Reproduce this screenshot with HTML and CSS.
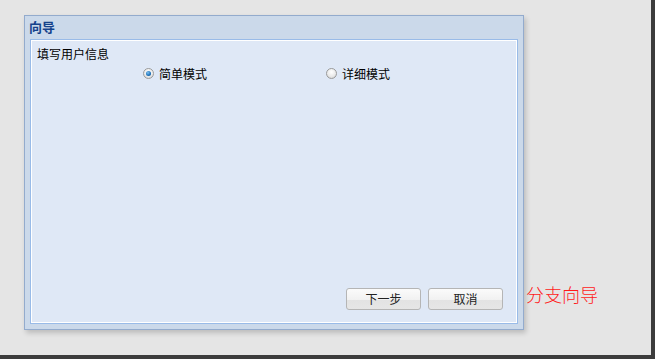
FILE: index.html
```html
<!DOCTYPE html>
<html lang="zh">
<head>
    <meta charset="UTF-8">
    <title>向导</title>
    <link rel="stylesheet" href="styles.css">
</head>
<body>
    <div class="screen">
        <div class="window">
            <div class="win-header">向导</div>
            <div class="win-body">
                <div class="form-title">填写用户信息</div>
                <div class="radio-group">
                    <label class="radio-item">
                        <span class="radio checked"></span>
                        <span class="radio-label">简单模式</span>
                    </label>
                    <label class="radio-item">
                        <span class="radio"></span>
                        <span class="radio-label">详细模式</span>
                    </label>
                </div>
                <div class="spacer"></div>
                <div class="buttons">
                    <button class="btn">下一步</button>
                    <button class="btn">取消</button>
                </div>
            </div>
        </div>
        <div class="note">分支向导</div>
    </div>
</body>
</html>
```

FILE: styles.css
```css
* {
    box-sizing: border-box;
}

html {
    overflow: hidden;
    background: #3c3c3c;
}

body {
    margin: 0;
    background: #e5e5e5;
    font-family: "Noto Sans CJK SC", "DejaVu Sans", sans-serif;
    font-size: 12px;
}

.screen {
    width: 100vw;
    height: 100vh;
    background: #e5e5e5;
    border-right: 4px solid #3c3c3c;
    border-bottom: 4px solid #3c3c3c;
    display: flex;
    align-items: flex-start;
}

.window {
    margin: 15px 0 0 24px;
    width: 500px;
    height: 315px;
    border: 1px solid #93abcd;
    background: #cbd9ea;
    box-shadow: 2px 3px 5px rgba(0,0,0,0.18);
    display: flex;
    flex-direction: column;
    padding: 0 5px 5px 5px;
    flex-shrink: 0;
}

.win-header {
    height: 23px;
    line-height: 22px;
    font-weight: bold;
    font-size: 13px;
    color: #15428b;
    margin-left: -1px;
}

.win-body {
    flex: 1;
    border: 1px solid #99bbe8;
    box-shadow: inset 0 0 0 1px #ffffff;
    background: #dfe8f6;
    display: flex;
    flex-direction: column;
    padding: 5px 14px 13px 6px;
}

.form-title {
    color: #000;
    line-height: 18px;
}

.radio-group {
    display: grid;
    grid-template-columns: 183px 183px;
    margin-left: 106px;
    margin-top: 1px;
}

.radio-item {
    display: flex;
    align-items: center;
    gap: 5px;
    height: 18px;
    color: #000;
}

.radio {
    width: 11px;
    height: 11px;
    border-radius: 50%;
    border: 1px solid #9a9a9a;
    background: radial-gradient(circle at 50% 35%, #ffffff 0%, #e8e8e8 60%, #c8c8c8 100%);
    position: relative;
}

.radio.checked::after {
    content: "";
    position: absolute;
    left: 2px;
    top: 2px;
    width: 5px;
    height: 5px;
    border-radius: 50%;
    background: radial-gradient(circle at 40% 35%, #7ec0f0 0%, #1a6fb8 60%, #0b3f7a 100%);
}

.spacer {
    flex: 1;
}

.buttons {
    display: flex;
    justify-content: flex-end;
    gap: 7px;
}

.btn {
    width: 75px;
    height: 22px;
    border: 1px solid #b5b5b5;
    border-radius: 3px;
    background: linear-gradient(#fbfbfb 0%, #f1f1f1 55%, #e3e3e3 56%, #e6e6e6 100%);
    font-family: "Noto Sans CJK SC", "DejaVu Sans", sans-serif;
    font-size: 12px;
    color: #222;
    padding: 0;
    line-height: 20px;
}

.note {
    align-self: flex-end;
    margin: 0 0 50px 2px;
    color: #ff1a1a;
    font-size: 18px;
    font-weight: 300;
    line-height: 22px;
}
```
